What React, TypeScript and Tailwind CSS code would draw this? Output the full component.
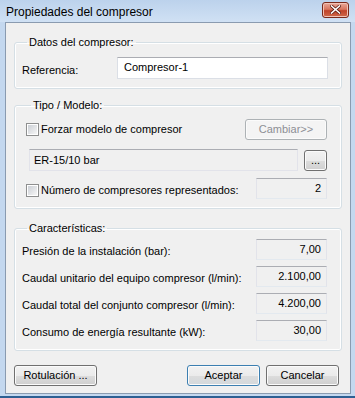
import React from "react";

const btnBase =
  "h-[21px] rounded-[3px] border text-[11px] leading-none flex items-center justify-center shadow-[inset_0_0_0_1px_#fbfbfb]";
const btnNormal =
  "border-[#707070] bg-[linear-gradient(#f2f2f2_0%,#ebebeb_50%,#dddddd_50%,#cfcfcf_100%)] text-black";

const Checkbox = () => (
  <span className="w-[13px] h-[13px] border border-[#8e8f8f] bg-white flex items-center justify-center shrink-0">
    <span className="w-[9px] h-[9px] bg-[linear-gradient(135deg,#cbcfd5,#f6f6f6)]" />
  </span>
);

const ReadOnlyField = ({ value, w = "w-[71px]" }: { value: string; w?: string }) => (
  <div
    className={`${w} h-[21px] border border-[#e2e3ea] border-t-[#abadb3] border-b-[#e3e9ef] bg-[#f0f0f0] flex items-center justify-end pr-[5px] text-[11px]`}
  >
    {value}
  </div>
);

const Group = ({ title, children, className }: { title: string; children: React.ReactNode; className?: string }) => (
  <fieldset className={`border border-[#d5dfe5] rounded-[3px] shadow-[inset_0_0_0_1px_#ffffff] ${className ?? ""}`}>
    <legend className="ml-[5px] px-[2px] text-[11px] leading-[13px] h-[13px]">{title}</legend>
    {children}
  </fieldset>
);

const rows = [
  { label: "Presión de la instalación (bar):", value: "7,00" },
  { label: "Caudal unitario del equipo compresor (l/min):", value: "2.100,00" },
  { label: "Caudal total del conjunto compresor (l/min):", value: "4.200,00" },
  { label: "Consumo de energía resultante (kW):", value: "30,00" },
];

export default function App() {
  return (
    <div className="w-[355px] h-[398px] flex flex-col bg-[#c4d8ef] border-b-[2px] border-[#2d5f92] font-['Liberation_Sans',Arial,sans-serif] text-black overflow-hidden">
      {/* title bar */}
      <div className="h-[22px] shrink-0 flex items-center justify-between pl-[6px] pr-[6px] bg-[linear-gradient(#bcd2ec,#d0e1f4)]">
        <span className="text-[12px] leading-none pt-[2px]">Propiedades del compresor</span>
        <div className="w-[27px] h-[16px] -mt-[3px] rounded-[3px] border border-[#7a2a1c] bg-[linear-gradient(#e9a99a_0%,#d8765f_45%,#c0432a_55%,#cf6a4c_100%)] flex items-center justify-center shadow-[inset_0_0_0_1px_#f2c3b6]">
          <svg width="11" height="9" viewBox="0 0 11 9">
            <path d="M1.5 1 L9.5 8 M9.5 1 L1.5 8" stroke="#5a1a10" strokeWidth="3" strokeLinecap="square" />
            <path d="M1.5 1 L9.5 8 M9.5 1 L1.5 8" stroke="#ffffff" strokeWidth="1.6" strokeLinecap="square" />
          </svg>
        </div>
      </div>

      {/* client area */}
      <div className="flex-1 ml-[5px] mr-[4px] mb-[2px] border border-[#8a9bb0] bg-[#f0f0f0] flex flex-col px-[8px] pt-[13px]">
        <Group title="Datos del compresor:" className="pt-[8px] pb-[9px] pl-[7px] pr-[13px]">
          <div className="flex items-center">
            <span className="w-[95px] text-[11px] mt-[4px]">Referencia:</span>
            <div className="flex-1 h-[22px] border border-[#dbdfe6] border-t-[#abadb3] bg-white flex items-center pl-[6px] text-[11px] pb-[2px]">
              Compresor-1
            </div>
          </div>
        </Group>

        <Group title="Tipo / Modelo:" className="mt-[10px] pt-[7px] pb-[9px] pl-[11px] pr-[14px]">
          <div className="flex items-center justify-between">
            <label className="flex items-center gap-[2px] text-[11px]">
              <Checkbox />
              <span>Forzar modelo de compresor</span>
            </label>
            <div className={`${btnBase} w-[82px] border-[#adb2b5] bg-[#f4f4f4] text-[#8d8f94]`}>Cambiar&gt;&gt;</div>
          </div>
          <div className="flex items-center mt-[9px] ml-[3px] gap-[6px]">
            <div className="flex-1 h-[22px] border border-[#e2e3ea] border-t-[#abadb3] bg-[#f0f0f0] flex items-center pl-[4px] text-[11px]">
              ER-15/10 bar
            </div>
            <div className={`${btnBase} ${btnNormal} w-[23px] items-end pb-[4px]`}>...</div>
          </div>
          <div className="flex items-center justify-between mt-[7px]">
            <label className="flex items-center gap-[2px] text-[11px] mt-[3px]">
              <Checkbox />
              <span>Número de compresores representados:</span>
            </label>
            <ReadOnlyField value="2" />
          </div>
        </Group>

        <Group title="Características:" className="mt-[13px] pt-[4px] pb-[9px] pl-[7px] pr-[14px]">
          <div className="flex flex-col gap-[6px]">
            {rows.map((r) => (
              <div key={r.label} className="flex items-center justify-between">
                <span className="text-[11px] mt-[3px]">{r.label}</span>
                <ReadOnlyField value={r.value} />
              </div>
            ))}
          </div>
        </Group>

        <div className="flex items-center mt-[14px] pr-[3px]">
          <div className={`${btnBase} ${btnNormal} w-[83px]`}>Rotulación ...</div>
          <div className="flex-1" />
          <div
            className={`${btnBase} w-[73px] border-[#3c7fb1] bg-[linear-gradient(#f2f2f2_0%,#ebebeb_50%,#dddddd_50%,#d3d8dc_100%)] shadow-[inset_0_0_0_1px_#8fd3f5] text-black`}
          >
            Aceptar
          </div>
          <div className={`${btnBase} ${btnNormal} w-[73px] ml-[6px]`}>Cancelar</div>
        </div>
      </div>
    </div>
  );
}
